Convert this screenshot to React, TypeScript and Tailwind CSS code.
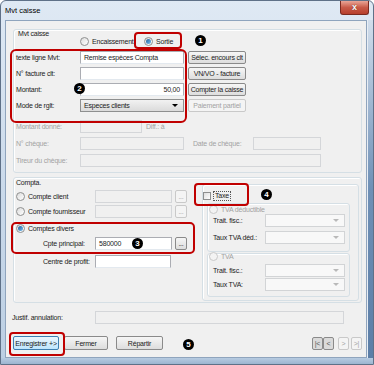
// ── Small controls ─────────────────────────────────
const Radio = ({ checked = false, disabled = false }: { checked?: boolean; disabled?: boolean }) => (
  <span
    className={`shrink-0 inline-flex items-center justify-center w-[9px] h-[9px] rounded-full border ${
      disabled ? 'border-[#c9c9c9] bg-[#f3f3f3]' : 'border-[#8e8f8f] bg-gradient-to-br from-[#dcdcdc] to-white'
    }`}
  >
    {checked && <span className="w-[5px] h-[5px] rounded-full bg-gradient-to-br from-[#1f5f9c] to-[#79c0ef]" />}
  </span>
)

const Box = ({
  className = '',
  disabled = false,
  children,
}: {
  className?: string
  disabled?: boolean
  children?: React.ReactNode
}) => (
  <div
    className={`h-[13px] shrink-0 border flex items-center px-[3px] ${
      disabled ? 'border-[#d4d6d9] bg-[#f0f0f0]' : 'border-[#abadb3] border-b-[#e3e9ef] bg-white'
    } ${className}`}
  >
    {children}
  </div>
)

const Select = ({ className = '', value = '', disabled = false }: { className?: string; value?: string; disabled?: boolean }) => (
  <div
    className={`h-[13px] shrink-0 border flex items-center justify-between pl-[3px] pr-[5px] ${
      disabled
        ? 'border-[#d2d4d6] bg-[#f8f8f8]'
        : 'border-[#8e8f8f] bg-gradient-to-b from-[#f2f2f2] to-[#dbdbdb]'
    } ${className}`}
  >
    <span>{value}</span>
    <span
      className={`w-0 h-0 border-x-[3px] border-x-transparent border-t-[3px] ${
        disabled ? 'border-t-[#b9b9b9]' : 'border-t-black'
      }`}
    />
  </div>
)

const Btn = ({
  className = '',
  disabled = false,
  children,
}: {
  className?: string
  disabled?: boolean
  children?: React.ReactNode
}) => (
  <div
    className={`h-[13px] shrink-0 rounded-[2px] border flex items-center justify-center ${
      disabled
        ? 'border-[#c9c9c9] bg-[#f4f4f4] text-[#a3a3a3]'
        : 'border-[#8a8a8a] bg-gradient-to-b from-[#f6f6f6] to-[#dddddd]'
    } ${className}`}
  >
    {children}
  </div>
)

// ── Annotations ────────────────────────────────────
const Ring = ({ className }: { className: string }) => (
  <div className={`absolute border-2 border-[#c00000] rounded-[4px] ${className}`} />
)

const Marker = ({ n, className }: { n: string; className: string }) => (
  <span
    className={`absolute w-[11px] h-[11px] rounded-full bg-black text-white text-[8px] font-bold leading-none tracking-normal flex items-center justify-center ${className}`}
  >
    {n}
  </span>
)

const Group = ({ className = '', children }: { className?: string; children?: React.ReactNode }) => (
  <div className={`border border-[#d5dfe5] rounded-[3px] shadow-[inset_1px_1px_0_#ffffff] ${className}`}>{children}</div>
)

// ── Dialog ─────────────────────────────────────────
export default function App() {
  const gray = 'text-[#a2a2a2]'
  return (
    <div className="w-[374px] h-[365px] relative overflow-hidden bg-white whitespace-nowrap font-['Liberation_Sans',Arial,sans-serif] text-[7px] leading-[9px] tracking-[-0.2px] text-[#1b1b1b]">
      <div className="w-[374px] h-[365px] flex flex-col border border-[#5f7188] rounded-t-[6px] bg-gradient-to-b from-[#dfe9f4] via-[#cbdaeb] to-[#bccfe3]">
        {/* title bar */}
        <div className="h-[19px] flex items-center">
          <span className="ml-[4px] text-[7.5px] tracking-normal text-black">Mvt caisse</span>
          <div className="ml-auto mr-[4px] self-start w-[29px] h-[14px] rounded-b-[3px] border border-t-0 border-[#7a2a20] bg-gradient-to-b from-[#e9a597] via-[#c85a48] to-[#b7402d] flex items-center justify-center">
            <span className="text-white text-[9px] font-bold leading-none [text-shadow:0_0_1px_#5a1a10]">x</span>
          </div>
        </div>

        <div className="flex flex-1">
          <div className="w-[4px]" />
          {/* client area */}
          <div className="w-[362px] border border-[#8fa4bd] bg-[#f0f0f0] flex flex-col">
            {/* Mvt caisse group */}
            <Group className="ml-[7px] mt-[8px] w-[349px] h-[144px] flex flex-col">
              <div className="pl-[4px] h-[7px] leading-[7px]">Mvt caisse</div>
              <div className="h-[9px] flex items-center pl-[66px]">
                <div className="w-[64px] flex items-center gap-[3px]">
                  <Radio />
                  <span>Encaissement</span>
                </div>
                <div className="flex items-center gap-[3px]">
                  <Radio checked />
                  <span>Sortie</span>
                </div>
              </div>

              <div className="mt-[5px] flex flex-col gap-[3px] pl-[2px]">
                <div className="flex items-center">
                  <span className="w-[64px]">texte ligne Mvt:</span>
                  <Box className="w-[104px]">Remise espèces Compta</Box>
                  <Btn className="ml-[4px] w-[58px]">Sélec. encours clt</Btn>
                </div>
                <div className="flex items-center">
                  <span className="w-[64px]">N° facture clt:</span>
                  <Box className="w-[104px]" />
                  <Btn className="ml-[4px] w-[58px]">VN/VO - facture</Btn>
                </div>
                <div className="flex items-center">
                  <span className="w-[64px]">Montant:</span>
                  <Box className="w-[104px] justify-end">50,00</Box>
                  <Btn className="ml-[4px] w-[58px]">Compter la caisse</Btn>
                </div>
                <div className="flex items-center">
                  <span className="w-[64px]">Mode de rglt:</span>
                  <Select className="w-[104px]" value="Especes clients" />
                  <Btn disabled className="ml-[4px] w-[58px]">Paiement partiel</Btn>
                </div>

                <div className={`mt-[5px] flex items-center ${gray}`}>
                  <span className="w-[64px]">Montant donné:</span>
                  <Box disabled className="w-[62px]" />
                  <span className="ml-[4px]">Diff.: à</span>
                </div>
                <div className={`mt-[1px] flex items-center ${gray}`}>
                  <span className="w-[64px]">N° chèque:</span>
                  <Box disabled className="w-[104px]" />
                  <span className="ml-[9px] w-[60px]">Date de chèque:</span>
                  <Box disabled className="w-[68px]" />
                </div>
                <div className={`mt-[1px] flex items-center ${gray}`}>
                  <span className="w-[64px]">Tireur du chèque:</span>
                  <Box disabled className="w-[241px]" />
                </div>
              </div>
            </Group>

            {/* Compta group */}
            <Group className="ml-[7px] mt-[4px] w-[349px] h-[126px] flex">
              <div className="w-[186px] flex flex-col">
                <div className="pl-[2px] h-[9px] leading-[9px]">Compta.</div>
                <div className="mt-[3px] flex items-center">
                  <div className="w-[81px] pl-[2px] flex items-center gap-[3px]">
                    <Radio />
                    <span>Compte client</span>
                  </div>
                  <Box disabled className="w-[77px]" />
                  <Btn disabled className="ml-[3px] w-[12px] text-[#8a8a8a]">...</Btn>
                </div>
                <div className="mt-[2px] flex items-center">
                  <div className="w-[81px] pl-[2px] flex items-center gap-[3px]">
                    <Radio />
                    <span>Compte fournisseur</span>
                  </div>
                  <Box disabled className="w-[77px]" />
                  <Btn disabled className="ml-[3px] w-[12px] text-[#8a8a8a]">...</Btn>
                </div>
                <div className="mt-[4px] h-[13px] pl-[2px] flex items-center gap-[3px]">
                  <Radio checked />
                  <span>Comptes divers</span>
                </div>
                <div className="mt-[2px] flex items-center">
                  <span className="w-[81px] pl-[29px]">Cpte principal:</span>
                  <Box className="w-[77px]">580000</Box>
                  <Btn className="ml-[3px] w-[12px]">...</Btn>
                </div>
                <div className="mt-[5px] flex items-center">
                  <span className="w-[81px] pl-[29px]">Centre de profit:</span>
                  <Box className="w-[76px]" />
                </div>
              </div>

              {/* Taxe */}
              <Group className="ml-[2px] mt-[6px] w-[157px] h-[117px] flex flex-col">
                <div className="mt-[6px] h-[9px] flex items-center">
                  <span className="w-[8px] h-[8px] border border-[#8e8f8f] bg-gradient-to-br from-[#dedede] to-white" />
                  <span className="ml-[2px] px-[1px] border border-dotted border-[#555] leading-[8px]">Taxe</span>
                </div>
                <Group className="ml-[4px] mt-[3px] w-[143px] h-[49px] flex flex-col">
                  <div className={`mt-[1px] h-[8px] pl-[1px] flex items-center gap-[3px] ${gray}`}>
                    <Radio disabled />
                    <span>TVA déductible</span>
                  </div>
                  <div className="mt-[1px] flex items-center">
                    <span className="w-[57px] pl-[5px]">Trait. fisc.:</span>
                    <Select disabled className="w-[80px]" />
                  </div>
                  <div className="mt-[4px] flex items-center">
                    <span className="w-[57px] pl-[5px]">Taux TVA déd.:</span>
                    <Select disabled className="w-[80px]" />
                  </div>
                </Group>
                <Group className="ml-[4px] mt-[1px] w-[143px] h-[44px] flex flex-col">
                  <div className={`mt-[-2px] h-[8px] pl-[1px] flex items-center gap-[3px] ${gray}`}>
                    <Radio disabled />
                    <span>TVA</span>
                  </div>
                  <div className="mt-[4px] flex items-center">
                    <span className="w-[57px] pl-[5px]">Trait. fisc.:</span>
                    <Select disabled className="w-[80px]" />
                  </div>
                  <div className="mt-[1px] flex items-center">
                    <span className="w-[57px] pl-[5px]">Taux TVA:</span>
                    <Select disabled className="w-[80px]" />
                  </div>
                </Group>
              </Group>
            </Group>

            {/* Justif. annulation */}
            <div className="mt-[8px] pl-[6px] flex items-center">
              <span className="w-[83px]">Justif. annulation:</span>
              <Box disabled className="w-[249px]" />
            </div>

            {/* bottom buttons */}
            <div className="mt-[12px] pl-[7px] pr-[4px] flex items-center">
              <div className="h-[14px] w-[46px] rounded-[2px] border border-[#3c7fb1] bg-gradient-to-b from-[#eaf6fd] to-[#bee6fd] flex items-center justify-center">
                Enregistrer +&gt;
              </div>
              <Btn className="ml-[5px] w-[44px] h-[14px]">Fermer</Btn>
              <Btn className="ml-[8px] w-[47px] h-[14px]">Répartir</Btn>
              <div className="ml-auto flex items-center">
                <Btn className="w-[11px] h-[13px] bg-none bg-[#dadada] text-[#555]">|&lt;</Btn>
                <Btn className="w-[11px] h-[13px] bg-none bg-[#dadada] text-[#555]">&lt;</Btn>
                <Btn disabled className="ml-[4px] w-[11px]">&gt;</Btn>
                <Btn disabled className="ml-[2px] w-[11px]">&gt;|</Btn>
              </div>
            </div>
          </div>
          <div className="w-[6px] bg-gradient-to-b from-[#d2deec] via-[#6f90b6] to-[#5c7ea7] border-l border-[#e8eef5]" />
        </div>
        <div className="h-[6px] bg-gradient-to-b from-[#b7cbe1] to-[#9db5d0]" />
      </div>

      {/* annotations */}
      <Ring className="left-[134px] top-[32px] w-[48px] h-[17px]" />
      <Ring className="left-[10px] top-[49px] w-[177px] h-[74px] rounded-[6px]" />
      <Ring className="left-[11px] top-[222px] w-[184px] h-[32px] rounded-[5px]" />
      <Ring className="left-[194px] top-[183px] w-[55px] h-[23px]" />
      <Ring className="left-[9px] top-[332px] w-[56px] h-[24px]" />
      <Marker n="1" className="left-[195px] top-[35px]" />
      <Marker n="2" className="left-[74px] top-[83px]" />
      <Marker n="3" className="left-[132px] top-[238px]" />
      <Marker n="4" className="left-[261px] top-[189px]" />
      <Marker n="5" className="left-[183px] top-[339px]" />
    </div>
  )
}
